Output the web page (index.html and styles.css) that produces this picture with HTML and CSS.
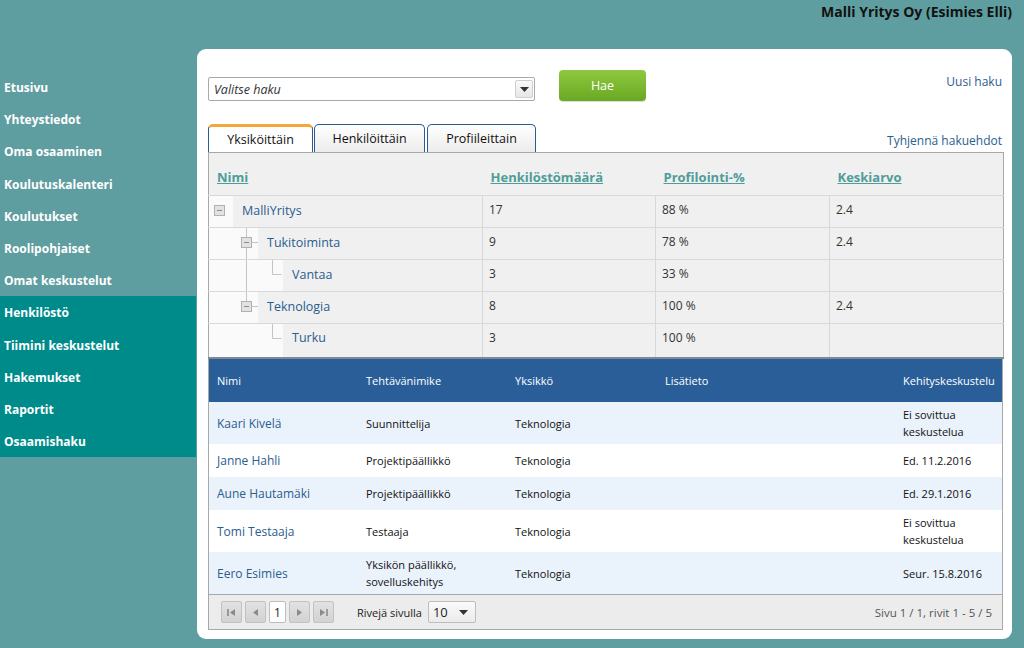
FILE: index.html
```html
<!DOCTYPE html>
<html lang="fi">
<head>
<meta charset="utf-8">
<title>Henkilöstö</title>
<link rel="stylesheet" href="styles.css">
</head>
<body>
<header class="topbar">Malli Yritys Oy (Esimies Elli)</header>
<div class="layout">
  <nav class="sidebar">
    <a class="nav-item">Etusivu</a>
    <a class="nav-item">Yhteystiedot</a>
    <a class="nav-item">Oma osaaminen</a>
    <a class="nav-item">Koulutuskalenteri</a>
    <a class="nav-item">Koulutukset</a>
    <a class="nav-item">Roolipohjaiset</a>
    <a class="nav-item">Omat keskustelut</a>
    <div class="nav-group">
      <a class="nav-item">Henkilöstö</a>
      <a class="nav-item">Tiimini keskustelut</a>
      <a class="nav-item">Hakemukset</a>
      <a class="nav-item">Raportit</a>
      <a class="nav-item">Osaamishaku</a>
    </div>
  </nav>
  <main class="panel">
    <div class="search-row">
      <div class="select">
        <span class="select-text">Valitse haku</span>
        <span class="select-arrow"><svg width="9" height="5" viewBox="0 0 9 5"><path d="M0 0h9L4.5 5z" fill="#333"/></svg></span>
      </div>
      <button class="btn-hae">Hae</button>
      <a class="link new-search">Uusi haku</a>
    </div>
    <div class="tabs-row">
      <div class="tabs">
        <span class="tab active">Yksiköittäin</span>
        <span class="tab">Henkilöittäin</span>
        <span class="tab">Profiileittain</span>
      </div>
      <a class="link clear">Tyhjennä hakuehdot</a>
    </div>
    <table class="tree">
      <colgroup><col class="c1"><col class="c2"><col class="c3"><col class="c4"></colgroup>
      <thead>
        <tr><th>Nimi</th><th>Henkilöstömäärä</th><th>Profilointi-%</th><th>Keskiarvo</th></tr>
      </thead>
      <tbody>
        <tr>
          <td class="name-cell"><div class="node">
            <svg class="indent" width="24" height="31" viewBox="0 0 24 31"><rect x="5.5" y="9.5" width="10" height="10" fill="#e2e2e2" stroke="#b0b0b0"/><path d="M8 14.5h5" stroke="#8a8a8a"/></svg>
            <span class="node-name">MalliYritys</span></div></td>
          <td>17</td><td>88 %</td><td>2.4</td>
        </tr>
        <tr>
          <td class="name-cell"><div class="node">
            <svg class="indent" width="49" height="31" viewBox="0 0 49 31"><path d="M37.5 0v31M42 14.5h7" stroke="#c4c4c4" fill="none"/><rect x="32.5" y="9.5" width="10" height="10" fill="#e2e2e2" stroke="#b0b0b0"/><path d="M35 14.5h5" stroke="#8a8a8a"/></svg>
            <span class="node-name">Tukitoiminta</span></div></td>
          <td>9</td><td>78 %</td><td>2.4</td>
        </tr>
        <tr>
          <td class="name-cell"><div class="node">
            <svg class="indent" width="74" height="31" viewBox="0 0 74 31"><path d="M37.5 0v31M63.5 0v14.5h9" stroke="#c4c4c4" fill="none"/></svg>
            <span class="node-name">Vantaa</span></div></td>
          <td>3</td><td>33 %</td><td></td>
        </tr>
        <tr>
          <td class="name-cell"><div class="node">
            <svg class="indent" width="49" height="31" viewBox="0 0 49 31"><path d="M37.5 0v10M42 14.5h7" stroke="#c4c4c4" fill="none"/><rect x="32.5" y="9.5" width="10" height="10" fill="#e2e2e2" stroke="#b0b0b0"/><path d="M35 14.5h5" stroke="#8a8a8a"/></svg>
            <span class="node-name">Teknologia</span></div></td>
          <td>8</td><td>100 %</td><td>2.4</td>
        </tr>
        <tr class="last">
          <td class="name-cell"><div class="node">
            <svg class="indent" width="74" height="33" viewBox="0 0 74 33"><path d="M63.5 0v14.5h9" stroke="#c4c4c4" fill="none"/></svg>
            <span class="node-name">Turku</span></div></td>
          <td>3</td><td>100 %</td><td></td>
        </tr>
      </tbody>
    </table>
    <div class="grid">
      <table class="people">
        <colgroup><col class="p1"><col class="p2"><col class="p3"><col class="p4"><col class="p5"></colgroup>
        <thead>
          <tr><th>Nimi</th><th>Tehtävänimike</th><th>Yksikkö</th><th>Lisätieto</th><th>Kehityskeskustelu</th></tr>
        </thead>
        <tbody>
          <tr><td><a class="person">Kaari Kivelä</a></td><td>Suunnittelija</td><td>Teknologia</td><td></td><td>Ei sovittua<br>keskustelua</td></tr>
          <tr><td><a class="person">Janne Hahli</a></td><td>Projektipäällikkö</td><td>Teknologia</td><td></td><td>Ed. 11.2.2016</td></tr>
          <tr><td><a class="person">Aune Hautamäki</a></td><td>Projektipäällikkö</td><td>Teknologia</td><td></td><td>Ed. 29.1.2016</td></tr>
          <tr><td><a class="person">Tomi Testaaja</a></td><td>Testaaja</td><td>Teknologia</td><td></td><td>Ei sovittua<br>keskustelua</td></tr>
          <tr><td><a class="person">Eero Esimies</a></td><td>Yksikön päällikkö,<br>sovelluskehitys</td><td>Teknologia</td><td></td><td>Seur. 15.8.2016</td></tr>
        </tbody>
      </table>
      <div class="pager">
        <div class="pager-left">
          <span class="pbtn"><svg width="9" height="9" viewBox="0 0 9 9"><path d="M1 1v7" stroke="#8a8a8a" stroke-width="1.6"/><path d="M8 1v7L3 4.5z" fill="#8a8a8a"/></svg></span>
          <span class="pbtn"><svg width="9" height="9" viewBox="0 0 9 9"><path d="M7 1v7L2 4.5z" fill="#8a8a8a"/></svg></span>
          <span class="pinput">1</span>
          <span class="pbtn"><svg width="9" height="9" viewBox="0 0 9 9"><path d="M2 1v7l5-3.5z" fill="#8a8a8a"/></svg></span>
          <span class="pbtn"><svg width="9" height="9" viewBox="0 0 9 9"><path d="M1 1v7l5-3.5z" fill="#8a8a8a"/><path d="M8 1v7" stroke="#8a8a8a" stroke-width="1.6"/></svg></span>
          <span class="rows-label">Rivejä sivulla</span>
          <span class="rows-select"><span>10</span><svg width="9" height="5" viewBox="0 0 9 5"><path d="M0 0h9L4.5 5z" fill="#333"/></svg></span>
        </div>
        <span class="pager-info">Sivu 1 / 1, rivit 1 - 5 / 5</span>
      </div>
    </div>
  </main>
</div>
</body>
</html>
```
FILE: styles.css
```css
* { box-sizing: border-box; }
html, body { margin: 0; padding: 0; }
body {
  background: #5f9ea0;
  font-family: "Open Sans", "Noto Sans", "DejaVu Sans", sans-serif;
  font-size: 12px;
  color: #222;
  width: 1024px;
  height: 648px;
  overflow: hidden;
}
.topbar {
  height: 49px;
  text-align: right;
  padding: 3px 12px 0 0;
  font-weight: bold;
  font-size: 14px;
  color: #111;
  line-height: 18px;
}
.layout { display: flex; align-items: flex-start; }
.sidebar {
  width: 196px;
  padding-top: 22px;
  display: flex;
  flex-direction: column;
}
.nav-group { background: #008b8b; display: flex; flex-direction: column; }
.nav-item {
  display: block;
  height: 32.2px;
  line-height: 32px;
  padding-left: 4px;
  padding-top: 1px;
  color: #fff;
  font-weight: bold;
  font-size: 12px;
}
.panel {
  margin-left: 1px;
  width: 815px;
  height: 590px;
  background: #fff;
  border-radius: 9px;
  padding: 21px 9px 0 11px;
}
.link { color: #2b5d8f; font-size: 12px; }
.search-row {
  display: flex;
  align-items: flex-start;
  height: 53px;
}
.select {
  margin-top: 7px;
  width: 327px;
  height: 24px;
  border: 1px solid #a9a9a9;
  border-radius: 2px;
  display: flex;
  align-items: center;
  justify-content: space-between;
  padding-left: 5px;
  background: #fff;
}
.select-text { font-style: italic; font-size: 12.5px; color: #333; }
.select-arrow {
  width: 18px;
  height: 18px;
  margin-right: 1px;
  border: 1px solid #cfcfcf;
  border-radius: 2px;
  background: linear-gradient(#fafafa, #e6e6e6);
  display: flex;
  align-items: center;
  justify-content: center;
}
.btn-hae {
  margin-left: 24px;
  width: 87px;
  height: 31px;
  border: 0;
  border-radius: 4px;
  background: linear-gradient(#8fc840, #6aa823);
  color: #fff;
  font-family: inherit;
  font-size: 12.5px;
  box-shadow: 0 1px 1px rgba(0,0,0,0.15);
}
.new-search { margin-left: auto; margin-top: 3px; margin-right: 1px; }
.tabs-row {
  display: flex;
  justify-content: space-between;
  align-items: flex-end;
  height: 29px;
}
.tabs { display: flex; gap: 1px; align-items: flex-end; }
.tab {
  height: 28px;
  border: 1px solid #2c5b8e;
  border-bottom: 0;
  border-radius: 5px 5px 0 0;
  background: linear-gradient(#ffffff, #ececec);
  font-size: 12.5px;
  color: #111;
  display: flex;
  align-items: center;
  justify-content: center;
  width: 111px;
}
.tab:nth-child(3) { margin-left: 1px; width: 109px; }
.tab.active {
  width: 105px;
  background: #fff;
  border-top: 3px solid #f3a63a;
}
.clear { margin-right: 1px; margin-bottom: 3px; }
.tree {
  width: 795px;
  border-collapse: collapse;
  background: #f0f0f0;
  border: 1px solid #a8a8a8;
  border-bottom: 2px solid #7c8a93;
  table-layout: fixed;
}
.tree .c1 { width: 274px; }
.tree .c2 { width: 173px; }
.tree .c3 { width: 174px; }
.tree .c4 { width: 174px; }
.tree th {
  height: 43px;
  vertical-align: top;
  text-align: left;
  padding: 15px 8px 0;
  line-height: 18px;
  font-size: 13px;
  font-weight: bold;
  color: #4f9c98;
  text-decoration: underline;
}
.tree td {
  height: 32px;
  padding: 0 6px 4px;
  font-size: 12px;
  color: #333;
  border-top: 1px solid #d8d8d8;
  border-left: 1px solid #d8d8d8;
}
.tree tr.last td { height: 34px; padding-bottom: 6px; }
.tree tr.last td.name-cell { padding: 0; }
.tree td.name-cell { padding: 0; border-left: 0; }
.node { display: flex; align-items: center; height: 31px; }
.tree tr.last .node { height: 33px; align-items: flex-start; }
.tree tr.last .node-name { padding-top: 5px; }
.indent { display: block; background: #fafafa; flex: none; }
.node-name { padding-left: 9px; padding-bottom: 3px; color: #2b5d8f; font-size: 12.5px; }
.grid {
  width: 795px;
  border: 1px solid #a8a8a8;
  border-top: 0;
}
.people {
  width: 100%;
  border-collapse: collapse;
  table-layout: fixed;
}
.people .p1 { width: 149px; }
.people .p2 { width: 149px; }
.people .p3 { width: 150px; }
.people .p4 { width: 238px; }
.people .p5 { width: 107px; }
.people th {
  background: #2a5e98;
  color: #fff;
  font-weight: normal;
  font-size: 11px;
  text-align: left;
  height: 43px;
  padding: 0 8px;
}
.people td {
  height: 33px;
  padding: 4px 8px;
  line-height: 17px;
  font-size: 11px;
  color: #111;
}
.people tbody tr:nth-child(odd) { background: #eaf2fc; }
.people tbody tr:nth-child(even) { background: #fff; }
.person { color: #2b5d8f; font-size: 12px; }
.pager {
  height: 35px;
  border-top: 1px solid #a8a8a8;
  background: #ececec;
  display: flex;
  align-items: center;
  justify-content: space-between;
  padding: 0 10px 0 12px;
}
.pager-left { display: flex; align-items: center; gap: 3px; }
.pbtn {
  width: 21px;
  height: 22px;
  border: 1px solid #c2c2c2;
  border-radius: 2px;
  background: linear-gradient(#e2e2e2, #d2d2d2);
  display: flex;
  align-items: center;
  justify-content: center;
}
.pinput {
  width: 17px;
  height: 22px;
  border: 1px solid #bdbdbd;
  border-radius: 2px;
  background: #fff;
  font-size: 12px;
  display: flex;
  align-items: center;
  justify-content: center;
}
.rows-label { margin-left: 20px; font-size: 11px; color: #222; }
.rows-select {
  margin-left: 3px;
  width: 48px;
  height: 22px;
  border: 1px solid #bdbdbd;
  border-radius: 2px;
  background: linear-gradient(#fafafa, #ebebeb);
  display: flex;
  align-items: center;
  justify-content: space-between;
  padding: 0 7px 0 4px;
  font-size: 13px;
}
.pager-info { font-size: 11.5px; color: #555; }
```
